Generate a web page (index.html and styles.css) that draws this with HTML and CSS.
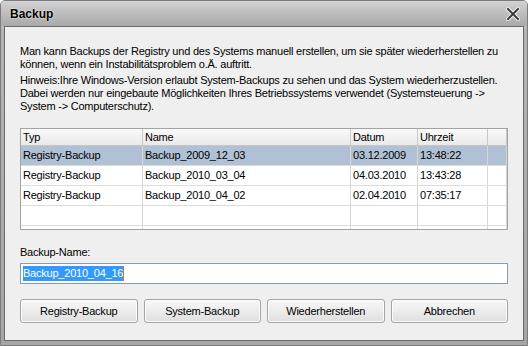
FILE: index.html
```html
<!DOCTYPE html>
<html>
<head>
    <title>Backup</title>
    <link rel="stylesheet" href="styles.css">
</head>
<body>
    <div class="window">
        <div class="titlebar">
            <span class="title">Backup</span>
            <svg class="close" width="14" height="14" viewBox="0 0 14 14">
                <path d="M2 2 L12 12 M12 2 L2 12" stroke="#f4f4f4" stroke-width="4" stroke-linecap="square"/>
                <path d="M2 2 L12 12 M12 2 L2 12" stroke="#3c3c3c" stroke-width="2" stroke-linecap="square"/>
            </svg>
        </div>
        <div class="client">
            <p class="intro">Man kann Backups der Registry und des Systems manuell erstellen, um sie später wiederherstellen zu können, wenn ein Instabilitätsproblem o.Ä. auftritt.</p>
            <p class="intro">Hinweis:Ihre Windows-Version erlaubt System-Backups zu sehen und das System wiederherzustellen. Dabei werden nur eingebaute Möglichkeiten Ihres Betriebssystems verwendet (Systemsteuerung -&gt; System -&gt; Computerschutz).</p>

            <div class="list">
                <div class="row head">
                    <div class="cell">Typ</div>
                    <div class="cell">Name</div>
                    <div class="cell">Datum</div>
                    <div class="cell">Uhrzeit</div>
                    <div class="cell"></div>
                </div>
                <div class="row selected">
                    <div class="cell">Registry-Backup</div>
                    <div class="cell">Backup_2009_12_03</div>
                    <div class="cell">03.12.2009</div>
                    <div class="cell">13:48:22</div>
                    <div class="cell"></div>
                </div>
                <div class="row">
                    <div class="cell">Registry-Backup</div>
                    <div class="cell">Backup_2010_03_04</div>
                    <div class="cell">04.03.2010</div>
                    <div class="cell">13:43:28</div>
                    <div class="cell"></div>
                </div>
                <div class="row">
                    <div class="cell">Registry-Backup</div>
                    <div class="cell">Backup_2010_04_02</div>
                    <div class="cell">02.04.2010</div>
                    <div class="cell">07:35:17</div>
                    <div class="cell"></div>
                </div>
                <div class="row">
                    <div class="cell"></div>
                    <div class="cell"></div>
                    <div class="cell"></div>
                    <div class="cell"></div>
                    <div class="cell"></div>
                </div>
                <div class="row">
                    <div class="cell"></div>
                    <div class="cell"></div>
                    <div class="cell"></div>
                    <div class="cell"></div>
                    <div class="cell"></div>
                </div>
            </div>

            <div class="label">Backup-Name:</div>
            <div class="namebox"><span class="sel">Backup_2010_04_16</span><span class="caret"></span></div>

            <div class="buttons">
                <button>Registry-Backup</button>
                <button>System-Backup</button>
                <button>Wiederherstellen</button>
                <button>Abbrechen</button>
            </div>
        </div>
    </div>
</body>
</html>
```

FILE: styles.css
```css
body {
    margin: 0;
    padding: 0;
    font-family: "Liberation Sans", Arial, sans-serif;
    font-size: 11px;
    letter-spacing: -0.22px;
    color: black;
    background: white;
}

.window {
    width: 528px;
    height: 346px;
    box-sizing: border-box;
    display: flex;
    flex-direction: column;
    border: 1px solid #7c7c7c;
    border-radius: 5px 5px 0 0;
    background: linear-gradient(#dadada, #b4b4b4 30px, #a6a6a6);
}

.titlebar {
    height: 25px;
    display: flex;
    align-items: center;
    justify-content: space-between;
    padding: 0 7px 0 9px;
    background: linear-gradient(#d4d4d4, #c4c4c4 8px, #a9a9a9);
    border-radius: 4px 4px 0 0;
}

.title {
    font-weight: bold;
    font-size: 12px;
    letter-spacing: 0;
    text-shadow: 0 0 2px #ffffff;
}

.close {
    display: block;
}

.client {
    flex: 1;
    margin: 0 3px 4px 3px;
    border: 1px solid #6a6a6a;
    background: #efefef;
    padding: 18px 15px 0 15px;
}

.intro {
    margin: 0 0 3px 0;
    line-height: 13px;
}

.list {
    margin-top: 15px;
    height: 100px;
    border: 1px solid #a3a3a3;
    background: white;
    overflow: hidden;
}

.row {
    display: grid;
    grid-template-columns: 122px 208px 67px 70px 1fr;
    height: 20px;
    border-bottom: 1px solid #dcdcdc;
    box-sizing: border-box;
}

.cell {
    border-right: 1px solid #d6d6d6;
    padding-left: 2px;
    line-height: 19px;
    white-space: nowrap;
}

.row.head {
    height: 17px;
    background: linear-gradient(#fafafa, #e9e9e9);
    border-bottom: 1px solid #c6c6c6;
}

.row.head .cell {
    line-height: 16px;
    border-right: 1px solid #c8c8c8;
}

.row.selected {
    background: #b1c1d5;
}

.label {
    margin-top: 15px;
    line-height: 14px;
}

.namebox {
    margin-top: 4px;
    height: 21px;
    box-sizing: border-box;
    border: 1px solid #7f9db9;
    background: white;
    padding: 2px 2px;
    display: flex;
    align-items: center;
}

.sel {
    background: #3399ff;
    color: white;
    line-height: 15px;
}

.caret {
    width: 1px;
    height: 15px;
    background: #d07a1c;
}

.buttons {
    display: flex;
    gap: 6px;
    margin-top: 15px;
}

button {
    flex: 1;
    height: 24px;
    font-family: "Liberation Sans", Arial, sans-serif;
    font-size: 11px;
    letter-spacing: -0.22px;
    color: black;
    border: 1px solid #a4a4a4;
    border-radius: 3px;
    background: linear-gradient(#f8f8f8, #ececec 50%, #dedede);
    box-shadow: inset 0 0 0 1px #fcfcfc;
    padding: 0;
}
```
